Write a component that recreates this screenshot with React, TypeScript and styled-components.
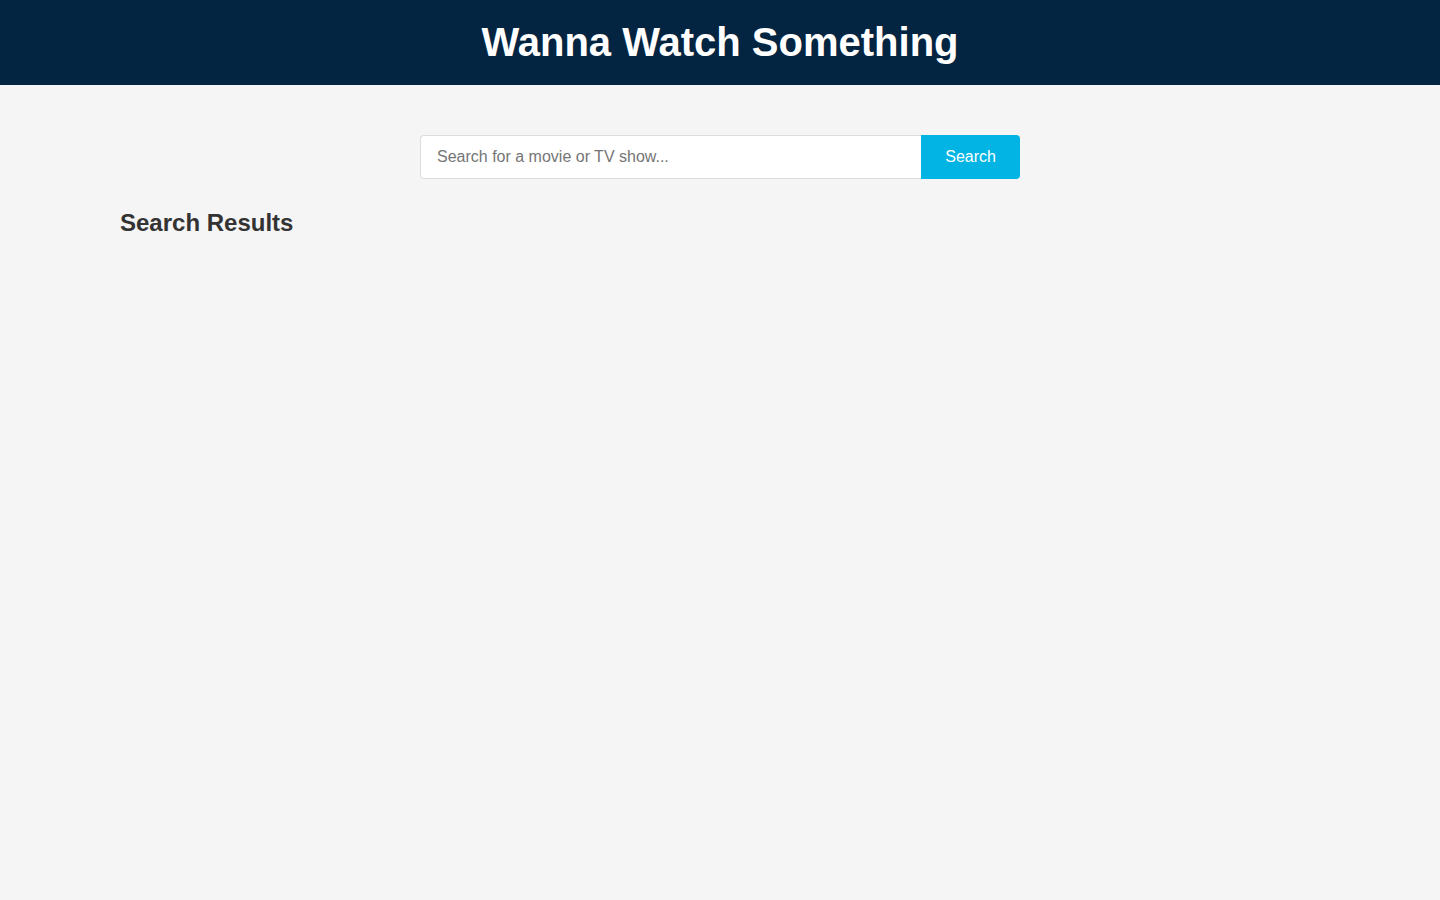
import React, { useState } from "react";
import styled, { createGlobalStyle } from "styled-components";

const GlobalStyle = createGlobalStyle`
  * {
    box-sizing: border-box;
  }

  body {
    margin: 0;
    background-color: #f5f5f5;
    font-family: "Liberation Sans", Arial, sans-serif;
    color: #333333;
  }
`;

const Page = styled.div`
  min-height: 100vh;
  background-color: #f5f5f5;
`;

const Header = styled.header`
  background-color: #032541;
  padding: 20px 0;
  text-align: center;
`;

const Title = styled.h1`
  margin: 0;
  font-size: 40px;
  line-height: 45px;
  font-weight: 700;
  color: #ffffff;
`;

const Main = styled.main`
  max-width: 1200px;
  margin: 0 auto;
  padding-top: 50px;
`;

const SearchForm = styled.form`
  display: flex;
  width: 600px;
  margin: 0 auto 30px;
`;

const SearchInput = styled.input`
  flex: 1;
  height: 44px;
  padding: 0 16px;
  border: 1px solid #dddddd;
  border-right: none;
  border-radius: 4px 0 0 4px;
  background: #ffffff;
  font-family: inherit;
  font-size: 16px;
  color: #333333;
  outline: none;

  &::placeholder {
    color: #757575;
  }
`;

const SearchButton = styled.button`
  height: 44px;
  padding: 0 24px;
  border: none;
  border-radius: 0 4px 4px 0;
  background-color: #01b4e4;
  color: #ffffff;
  font-family: inherit;
  font-size: 16px;
  cursor: pointer;
`;

const SectionTitle = styled.h2`
  margin: 0;
  font-size: 24px;
  font-weight: 700;
  color: #333333;
`;

const Results = styled.div`
  display: grid;
  grid-template-columns: repeat(auto-fill, minmax(200px, 1fr));
  gap: 20px;
  margin-top: 20px;
`;

export default function App() {
  const [query, setQuery] = useState("");

  return (
    <Page>
      <GlobalStyle />
      <Header>
        <Title>Wanna Watch Something</Title>
      </Header>
      <Main>
        <SearchForm onSubmit={(e) => e.preventDefault()}>
          <SearchInput
            type="text"
            placeholder="Search for a movie or TV show..."
            value={query}
            onChange={(e) => setQuery(e.target.value)}
          />
          <SearchButton type="submit">Search</SearchButton>
        </SearchForm>
        <SectionTitle>Search Results</SectionTitle>
        <Results />
      </Main>
    </Page>
  );
}
